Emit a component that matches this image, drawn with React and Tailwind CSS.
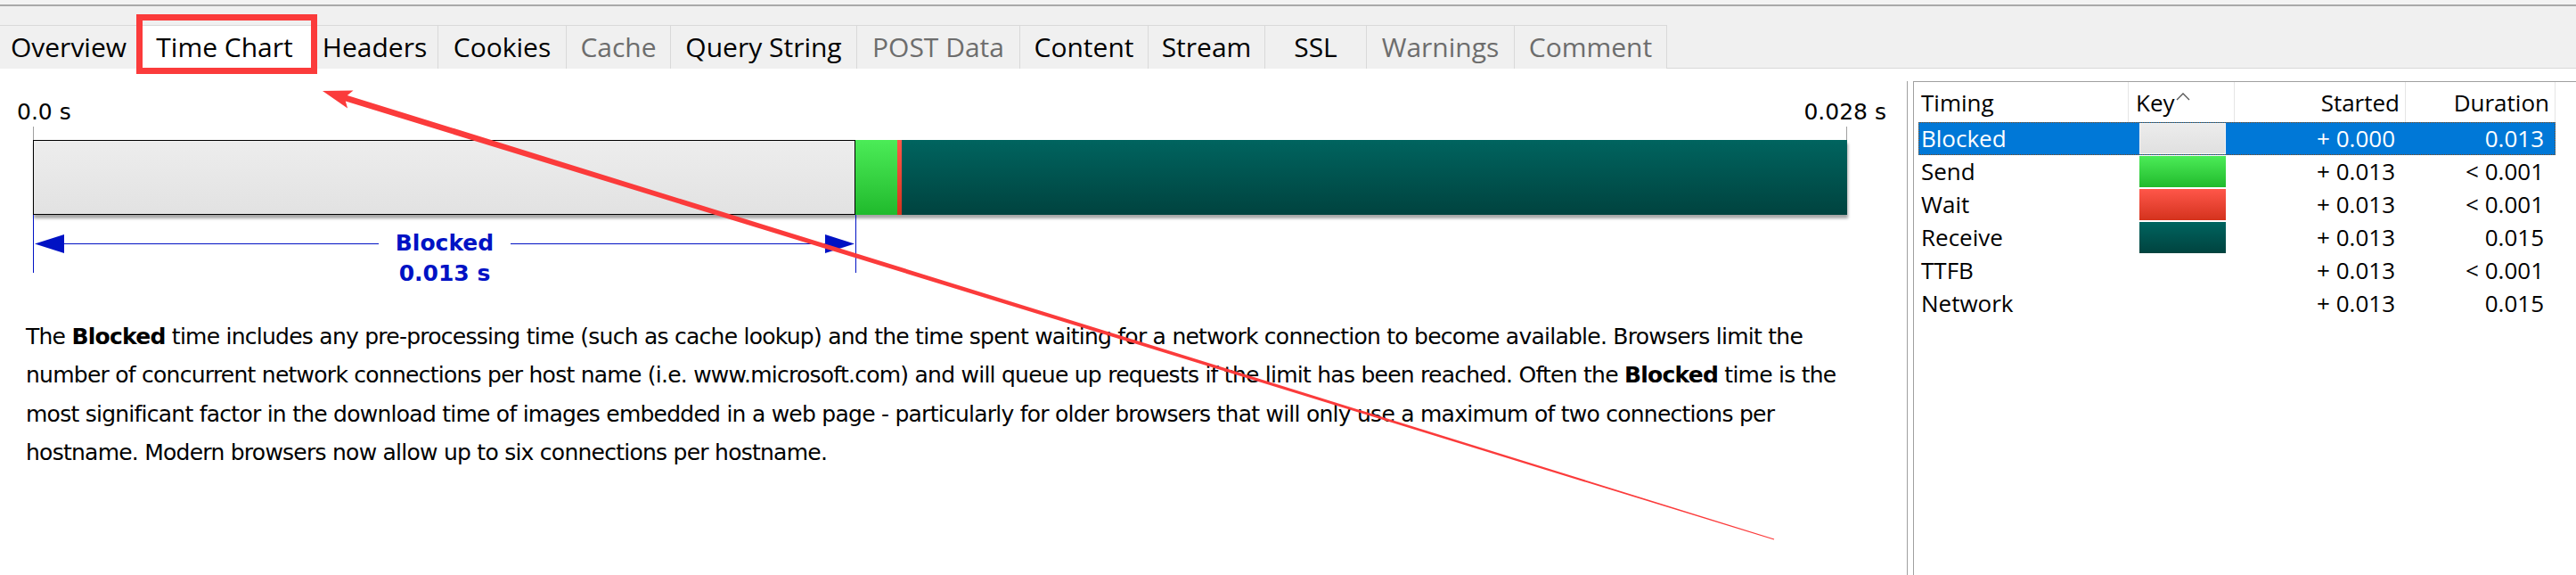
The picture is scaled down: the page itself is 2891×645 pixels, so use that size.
import React from "react";

const tabs = [
  { label: "Overview", w: "w-[155px]" },
  { label: "Time Chart", w: "w-[195px]", sel: true },
  { label: "Headers", w: "w-[142px]" },
  { label: "Cookies", w: "w-[144px]" },
  { label: "Cache", w: "w-[117px]", dis: true },
  { label: "Query String", w: "w-[209px]" },
  { label: "POST Data", w: "w-[183px]", dis: true },
  { label: "Content", w: "w-[144px]" },
  { label: "Stream", w: "w-[131px]" },
  { label: "SSL", w: "w-[114px]" },
  { label: "Warnings", w: "w-[166px]", dis: true },
  { label: "Comment", w: "w-[171px]", dis: true },
];

const rows = [
  { name: "Blocked", sw: "bg-gradient-to-b from-[#ececec] to-[#e0e0e0] border border-[#f6f6f6]", start: "+ 0.000", dur: "0.013", sel: true },
  { name: "Send", sw: "bg-gradient-to-b from-[#4bec57] to-[#1fba2c]", start: "+ 0.013", dur: "< 0.001" },
  { name: "Wait", sw: "bg-gradient-to-b from-[#ff5649] to-[#d4321c]", start: "+ 0.013", dur: "< 0.001" },
  { name: "Receive", sw: "bg-gradient-to-b from-[#00645f] to-[#00433f]", start: "+ 0.013", dur: "0.015" },
  { name: "TTFB", sw: "", start: "+ 0.013", dur: "< 0.001" },
  { name: "Network", sw: "", start: "+ 0.013", dur: "0.015" },
];

const sans = { fontFamily: '"Open Sans", "Noto Sans", sans-serif' };
const deja = { fontFamily: '"DejaVu Sans", "Liberation Sans", sans-serif' };

function ArrowHead({ dir }) {
  return (
    <svg width="33" height="21" viewBox="0 0 33 21" className="shrink-0">
      {dir === "left" ? (
        <polygon points="0,10.5 33,0 33,21" fill="#0012c4" />
      ) : (
        <polygon points="33,10.5 0,0 0,21" fill="#0012c4" />
      )}
    </svg>
  );
}

export default function App() {
  return (
    <div className="relative w-[2891px] h-[645px] overflow-hidden bg-white text-black">
      {/* Tab strip */}
      <div className="h-[5px] bg-[#f3f3f3]" />
      <div className="h-[2px] bg-[#a9a9a9]" />
      <div className="h-[21px] bg-[#f0f0f0]" />
      <div className="h-[49px] bg-[#f0f0f0] flex" style={sans}>
        {tabs.map((t) => (
          <div
            key={t.label}
            className={
              "h-[49px] flex items-center justify-center border-t border-r border-[#d9d9d9] text-[30px] leading-none " +
              t.w +
              " " +
              (t.sel ? "bg-white " : "") +
              (t.dis ? "text-[#6d6d6d]" : "text-black")
            }
          >
            {t.label}
          </div>
        ))}
        <div className="flex-1 border-b border-[#d9d9d9]" />
      </div>

      {/* Body */}
      <div className="flex h-[568px]">
        {/* Left: chart + description */}
        <div className="w-[2140px] shrink-0" style={deja}>
          <div className="pl-[37px] pt-[35px]">
            <div className="relative w-[2036px]">
              {/* labels */}
              <div className="relative h-[28px] text-[25px] leading-[28px]">
                <span className="absolute left-[-18px] top-0">0.0 s</span>
                <span className="absolute right-[-44px] top-0">0.028 s</span>
              </div>
              {/* ticks */}
              <div className="flex justify-between h-[17px] pt-[2px]">
                <div className="w-px h-full bg-[#a0a0a0]" />
                <div className="w-px h-full bg-[#a0a0a0]" />
              </div>
              {/* bar */}
              <div className="flex h-[84px] shadow-[1px_4px_3px_rgba(0,0,0,0.35)]">
                <div className="w-[923px] h-full border border-black bg-gradient-to-b from-[#ededed] to-[#e2e2e2]" />
                <div className="w-[47px] h-full bg-gradient-to-b from-[#4bec57] to-[#1fba2c]" />
                <div className="w-[5px] h-full bg-gradient-to-b from-[#ff5649] to-[#d4321c]" />
                <div className="flex-1 h-full bg-gradient-to-b from-[#00645f] to-[#00433f]" />
              </div>
              {/* dimension */}
              <div className="w-[924px] h-[65px] border-x border-[#0012c4] pt-[15px] flex items-start">
                <div className="flex-1 h-[34px] flex items-center pl-px">
                  <ArrowHead dir="left" />
                  <div className="flex-1 h-px bg-[#0012c4]" />
                </div>
                <div className="px-[19px] text-center font-bold text-[25px] leading-[34px] text-[#0012c4]">
                  <div>Blocked</div>
                  <div>0.013 s</div>
                </div>
                <div className="flex-1 h-[34px] flex items-center pr-px">
                  <div className="flex-1 h-px bg-[#0012c4]" />
                  <ArrowHead dir="right" />
                </div>
              </div>
            </div>
          </div>
          {/* description */}
          <div className="mt-[50px] pl-[29px] text-[25px] leading-[43.3px] whitespace-nowrap tracking-[-0.75px]">
            <div>
              The <b>Blocked</b> time includes any pre-processing time (such as cache lookup) and the time spent waiting for a network connection to become available. Browsers limit the
            </div>
            <div>
              number of concurrent network connections per host name (i.e. www.microsoft.com) and will queue up requests if the limit has been reached. Often the <b>Blocked</b> time is the
            </div>
            <div>
              most significant factor in the download time of images embedded in a web page - particularly for older browsers that will only use a maximum of two connections per
            </div>
            <div>hostname. Modern browsers now allow up to six connections per hostname.</div>
          </div>
        </div>

        {/* Right: timing list */}
        <div className="flex-1 mt-[14px] border-l border-[#a0a0a0] pl-[6px]">
          <div className="h-full border-l border-t border-[#a0a0a0] pl-[5px]" style={sans}>
            <div className="flex h-[45px] text-[26px] leading-none">
              <div className="w-[236px] flex items-center pl-[3px] border-r border-[#e5e5e5]">Timing</div>
              <div className="w-[119px] flex items-center pl-[8px] border-r border-[#e5e5e5]">
                <span>Key</span>
                <svg width="16" height="10" viewBox="0 0 16 10" className="ml-[1px] mb-[14px]">
                  <polyline points="1,9 8,2 15,9" fill="none" stroke="#555" strokeWidth="1.3" />
                </svg>
              </div>
              <div className="w-[192px] flex items-center justify-end pr-[6px] border-r border-[#e5e5e5]">Started</div>
              <div className="w-[168px] flex items-center justify-end pr-[6px] border-r border-[#e5e5e5]">Duration</div>
            </div>
            {rows.map((r) => (
              <div
                key={r.name}
                className={
                  "flex w-[715px] h-[37px] text-[26px] leading-[35px] " +
                  (r.sel ? "bg-[#0078d7] text-white border border-dotted border-[#7a4a1a]" : "border border-transparent")
                }
              >
                <div className="w-[235px] pl-[2px]">{r.name}</div>
                <div className="w-[119px] pl-[12px] flex items-center">
                  {r.sw ? <div className={"w-[97px] h-[35px] " + r.sw} /> : null}
                </div>
                <div className="w-[192px] text-right pr-[12px]">{r.start}</div>
                <div className="w-[167px] text-right pr-[12px]">{r.dur}</div>
              </div>
            ))}
          </div>
        </div>
      </div>

      {/* Annotation: red box around selected tab */}
      <div className="absolute left-[153px] top-[16px] w-[203px] h-[67px] border-[7px] border-[#fb3b3b] pointer-events-none" />

      {/* Annotation: red arrow */}
      <svg className="absolute left-0 top-0 pointer-events-none" width="2891" height="645" viewBox="0 0 2891 645">
        <polygon
          points="362,102 396.5,101.4 389.8,106.9 1991.2,604.4 1990.8,605.6 387.8,113.6 390.1,121.4"
          fill="#fb3b3b"
        />
      </svg>
    </div>
  );
}
